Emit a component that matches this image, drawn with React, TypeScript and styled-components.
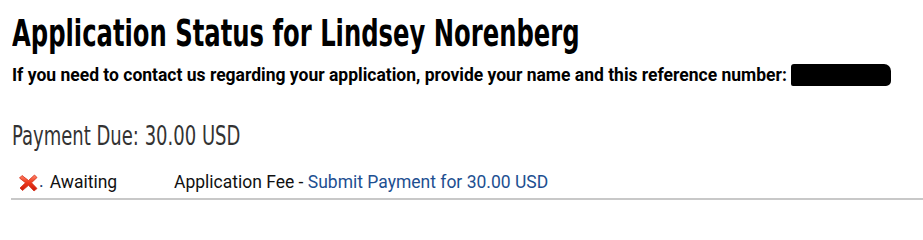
import { createGlobalStyle, styled } from 'styled-components';

const GlobalStyle = createGlobalStyle`
  body {
    margin: 0;
    background: #fff;
    font-family: Roboto, "Liberation Sans", sans-serif;
    color: #111;
  }
`;

const CrossIcon = () => (
  <svg width="21" height="19" viewBox="0 0 21 19">
    <defs>
      <linearGradient id="xg" x1="0" y1="0" x2="0" y2="1">
        <stop offset="0" stopColor="#ff8a70" />
        <stop offset="0.45" stopColor="#f03a1c" />
        <stop offset="1" stopColor="#c81a0a" />
      </linearGradient>
    </defs>
    <path
      d="M4 2.5 L10.5 7.5 L16.5 2 L19 4.5 L13.5 9.8 L19 15.5 L16 18 L10.5 12.3 L4.5 17.5 L2 15 L7.5 9.8 L1.5 5 Z"
      fill="url(#xg)"
      stroke="#d42a12"
      strokeWidth="0.8"
      strokeLinejoin="round"
    />
  </svg>
);

export default function App() {
  return (
    <>
      <GlobalStyle />
      <Page>
        <Title>Application Status for Lindsey Norenberg</Title>
        <Notice>
          If you need to contact us regarding your application, provide your name and this reference number:
          <Redacted />
        </Notice>
        <PaymentDue>Payment Due: 30.00 USD</PaymentDue>
        <FeeRow>
          <Status>
            <CrossIcon />
            <Dot>.</Dot>
            <span>Awaiting</span>
          </Status>
          <Item>
            Application Fee - <PayLink href="#">Submit Payment for 30.00 USD</PayLink>
          </Item>
        </FeeRow>
      </Page>
    </>
  );
}

const Page = styled.div`
  padding: 10px 0 0 11px;
`;

// condensed display face: squeeze a condensed sans to the reference width
const Title = styled.h1`
  display: inline-block;
  margin: 0 0 0 1px;
  white-space: nowrap;
  font-family: "DejaVu Sans Condensed", "Liberation Sans Narrow", sans-serif;
  font-weight: 700;
  font-size: 38px;
  line-height: 46px;
  color: #000;
  transform: scaleX(0.71);
  transform-origin: left center;
`;

const Notice = styled.p`
  margin: 6px 0 0 1px;
  display: flex;
  align-items: center;
  font-size: 17.5px;
  font-weight: 700;
  line-height: 26px;
  color: #000;
`;

const Redacted = styled.span`
  display: inline-block;
  width: 100px;
  height: 22px;
  margin-left: 4px;
  background: #000;
  border-radius: 3px 7px 5px 2px;
`;

const PaymentDue = styled.h2`
  display: block;
  width: max-content;
  margin: 32px 0 0 1px;
  white-space: nowrap;
  font-family: "DejaVu Sans Condensed", "Liberation Sans Narrow", sans-serif;
  font-weight: 400;
  font-size: 26px;
  line-height: 32px;
  color: #333;
  transform: scaleX(0.77);
  transform-origin: left center;
`;

const FeeRow = styled.div`
  display: grid;
  grid-template-columns: 156px 1fr;
  align-items: center;
  margin-top: 18px;
  padding: 0 0 4px 7px;
  border-bottom: 2px solid #c8c8c8;
  font-size: 17.5px;
  line-height: 24px;
  color: #111;
`;

const Status = styled.div`
  display: flex;
  align-items: center;

  & > span:last-child {
    margin-left: 6px;
  }
`;

const Dot = styled.span`
  color: #1a3d6e;
  line-height: 1;
  align-self: flex-end;
  margin-bottom: 4px;
`;

const Item = styled.div``;

const PayLink = styled.a`
  color: #1d4f91;
  text-decoration: none;
`;
